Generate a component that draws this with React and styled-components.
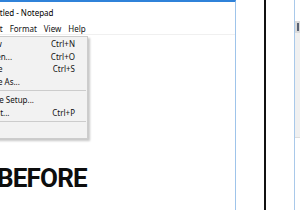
import React from "react";
import styled, { createGlobalStyle } from "styled-components";

const GlobalStyle = createGlobalStyle`
  html, body { margin: 0; padding: 0; background: #ffffff; }
  #root { width: 300px; height: 210px; }
`;

const Screen = styled.div`
  display: flex;
  width: 300px;
  height: 210px;
  overflow: hidden;
  background: #ffffff;
`;

const NotepadWindow = styled.div`
  position: relative;
  flex: none;
  width: 236px;
  height: 100%;
  box-sizing: border-box;
  border-top: 2px solid #2f82d9;
  border-right: 1px solid #9fc4ea;
  display: flex;
  flex-direction: column;
  overflow: hidden;
  font-family: "Noto Sans", "Open Sans", sans-serif;
  color: #111;
`;

const TitleBar = styled.div`
  flex: none;
  height: 21px;
  display: flex;
  align-items: center;
  margin-left: -16px;
  font-size: 8px;
  color: #000;
  white-space: nowrap;
`;

const MenuBar = styled.div`
  flex: none;
  height: 11px;
  display: flex;
  align-items: center;
  margin-left: -35px;
  border-bottom: 1px solid #f0f0f0;
  font-size: 8px;
  white-space: nowrap;
`;

const MenuBarItem = styled.span`
  padding: 0 3.5px;
  color: #111;
`;

const EditArea = styled.div`
  flex: 1;
  display: flex;
  flex-direction: column;
`;

const Caption = styled.div`
  margin-top: 130px;
  margin-left: -3px;
  font-family: Roboto, "Liberation Sans", sans-serif;
  font-weight: 700;
  font-size: 26px;
  line-height: 26px;
  letter-spacing: -0.8px;
  color: #0d0d0d;
  white-space: nowrap;
`;

const DropMenu = styled.div`
  position: absolute;
  left: -40px;
  top: 34px;
  width: 128px;
  box-sizing: border-box;
  padding: 0.5px 0;
  background: #f2f2f2;
  border: 1px solid #cccccc;
  box-shadow: 2px 2px 2px rgba(0, 0, 0, 0.22);
  font-size: 8px;
  color: #111;
`;

const MenuRow = styled.div`
  display: grid;
  grid-template-columns: 1fr auto;
  align-items: center;
  height: 12.5px;
  padding: 0 12px 0 24px;
  white-space: nowrap;
`;

const Shortcut = styled.span`
  text-align: right;
`;

const Separator = styled.div`
  height: 6px;
  display: flex;
  align-items: center;
  padding: 0 1px 0 24px;
  &::after {
    content: "";
    flex: 1;
    height: 1px;
    background: #cccccc;
  }
`;

const Gap = styled.div`
  flex: none;
  width: ${(p) => p.$w}px;
`;

const Divider = styled.div`
  flex: none;
  width: 2px;
  height: 100%;
  background: #111111;
`;

const OtherWindow = styled.div`
  flex: 1;
  display: flex;
  flex-direction: column;
  border-left: 1px solid #a9c9ea;
`;

const OtherTop = styled.div`
  flex: none;
  height: 21px;
`;

const OtherBar = styled.div`
  flex: none;
  height: 12px;
  background: #dadada;
  display: flex;
  align-items: center;
  padding-left: 2px;
`;

const OtherMark = styled.div`
  width: 2px;
  height: 8px;
  background: #596273;
`;

const OtherMenu = styled.div`
  flex: none;
  height: 104px;
  background: #f0f0f0;
  border-bottom: 1px solid #dddddd;
`;

const items = [
  ["New", "Ctrl+N"],
  ["Open...", "Ctrl+O"],
  ["Save", "Ctrl+S"],
  ["Save As...", ""],
  "sep",
  ["Page Setup...", ""],
  ["Print...", "Ctrl+P"],
  "sep",
  ["Exit", ""],
];

export default function App() {
  return (
    <>
      <GlobalStyle />
      <Screen>
        <NotepadWindow>
          <TitleBar>Untitled - Notepad</TitleBar>
          <MenuBar>
            <MenuBarItem>File</MenuBarItem>
            <MenuBarItem>Edit</MenuBarItem>
            <MenuBarItem>Format</MenuBarItem>
            <MenuBarItem>View</MenuBarItem>
            <MenuBarItem>Help</MenuBarItem>
          </MenuBar>
          <EditArea>
            <Caption>BEFORE</Caption>
          </EditArea>
          <DropMenu>
            {items.map((it, i) =>
              it === "sep" ? (
                <Separator key={i} />
              ) : (
                <MenuRow key={i}>
                  <span>{it[0]}</span>
                  <Shortcut>{it[1]}</Shortcut>
                </MenuRow>
              )
            )}
          </DropMenu>
        </NotepadWindow>
        <Gap $w={28} />
        <Divider />
        <Gap $w={28} />
        <OtherWindow>
          <OtherTop />
          <OtherBar>
            <OtherMark />
          </OtherBar>
          <OtherMenu />
        </OtherWindow>
      </Screen>
    </>
  );
}
